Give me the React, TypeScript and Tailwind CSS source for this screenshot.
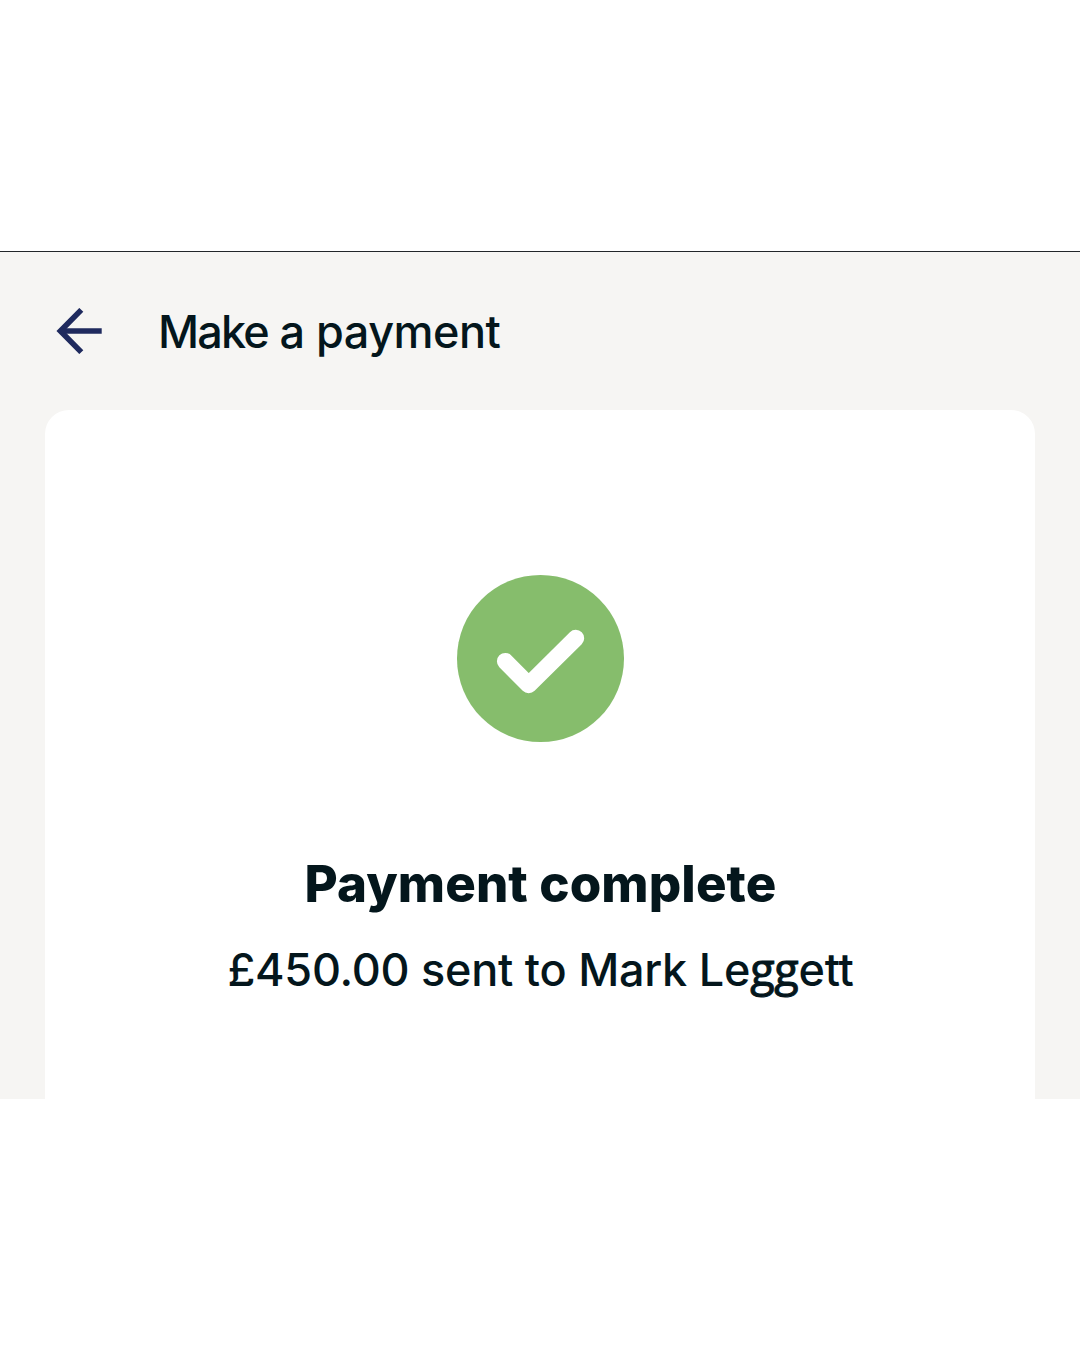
import React from 'react';

interface Payment {
  amount: string;
  payee: string;
}

const payment: Payment = {
  amount: '£450.00',
  payee: 'Mark Leggett',
};

const BackArrow: React.FC = () => (
  <svg width="46" height="46" viewBox="0 0 46 46" fill="none" stroke="#1f2a5e" strokeWidth="5.6">
    <path d="M25.3 1.9 L4.4 23 L25.3 44.1" />
    <path d="M4 23 H45.7" />
  </svg>
);

const SuccessBadge: React.FC = () => (
  <svg width="167" height="167" viewBox="0 0 167 167" fill="none">
    <circle cx="83.5" cy="83.5" r="83.5" fill="#86bd6c" />
    <path
      d="M48.3 86.3 L71.7 109.9 L118.8 63.2"
      stroke="#ffffff"
      strokeWidth="16.8"
      strokeLinecap="round"
      strokeLinejoin="round"
    />
  </svg>
);

// Two-storey g, which Inter does not have
const withDoubleG = (text: string) =>
  text.split(/(gg)/).map((part, index) =>
    part === 'gg' ? (
      <span
        key={index}
        className="font-['Open_Sans',sans-serif] [-webkit-text-stroke:1px_currentColor]"
      >
        {part}
      </span>
    ) : (
      part
    )
  );

const App: React.FC = () => {
  return (
    <div className="h-[1350px] w-[1080px] overflow-hidden bg-white pt-[251px] font-['Inter',sans-serif] text-[#04161c]">
      <div className="flex h-[848px] flex-col border-t border-[#22262a] bg-[#f6f5f3]">
        {/* Header */}
        <div className="flex h-[158px] shrink-0 items-center pl-[56px]">
          <button type="button" aria-label="Back">
            <BackArrow />
          </button>
          <h1 className="ml-[56px] mt-px whitespace-nowrap text-[45px] leading-[54px] font-medium tracking-[-0.5px]">
            <span className="tracking-[-1.8px]">Make</span> a payment
          </h1>
        </div>

        {/* Confirmation card */}
        <div className="mx-[45px] flex flex-1 flex-col items-center rounded-t-[24px] bg-white pt-[165px]">
          <SuccessBadge />
          <h2 className="mt-[111px] ml-px whitespace-nowrap text-[51px] leading-[62px] font-extrabold tracking-[0.1px]">
            Payment complete
          </h2>
          <p className="mt-[27px] ml-px whitespace-nowrap text-[45px] leading-[54px] font-medium tracking-[-0.25px]">
            {payment.amount} sent to {withDoubleG(payment.payee)}
          </p>
        </div>
      </div>
    </div>
  );
};

export default App;
